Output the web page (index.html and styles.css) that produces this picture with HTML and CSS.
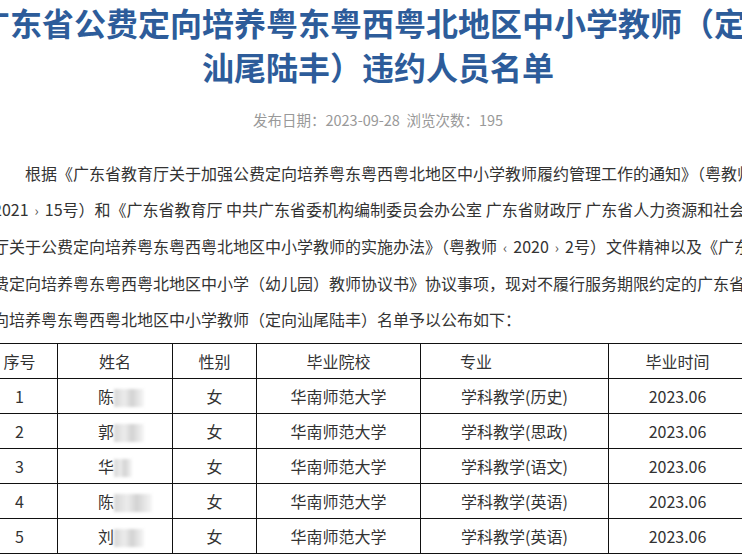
FILE: index.html
```html
<!DOCTYPE html>
<html lang="zh-CN">
<head>
<meta charset="utf-8">
<title>违约人员名单</title>
<link rel="stylesheet" href="styles.css">
</head>
<body>
<div class="page">
  <div class="article">
    <h1 class="title">广东省公费定向培养粤东粤西粤北地区中小学教师（定向<br>汕尾陆丰）违约人员名单</h1>
    <div class="meta">发布日期：2023-09-28&nbsp;&nbsp;浏览次数：195</div>
    <p class="body-text"><span class="indent">根据《广东省教育厅关于加强公费定向培养粤东粤西粤北地区中小学教师履约管理工作的通知》（粤教师〔</span><br>2021<span class="br">›</span>15号）和《广东省教育厅 中共广东省委机构编制委员会办公室 广东省财政厅 广东省人力资源和社会保障<br>厅关于公费定向培养粤东粤西粤北地区中小学教师的实施办法》（粤教师<span class="br">‹</span>2020<span class="br">›</span>2号）文件精神以及《广东省公<br>费定向培养粤东粤西粤北地区中小学（幼儿园）教师协议书》协议事项，现对不履行服务期限约定的广东省公费定<br>向培养粤东粤西粤北地区中小学教师（定向汕尾陆丰）名单予以公布如下：</p>
    <table class="list">
      <colgroup>
        <col class="c1"><col class="c2"><col class="c3"><col class="c4"><col class="c5"><col class="c6">
      </colgroup>
      <thead>
        <tr><th>序号</th><th>姓名</th><th>性别</th><th>毕业院校</th><th class="major-h">专业</th><th>毕业时间</th></tr>
      </thead>
      <tbody>
        <tr><td>1</td><td class="name">陈<span class="mask m30"></span></td><td>女</td><td>华南师范大学</td><td>学科教学(历史)</td><td>2023.06</td></tr>
        <tr><td>2</td><td class="name">郭<span class="mask m30"></span></td><td>女</td><td>华南师范大学</td><td>学科教学(思政)</td><td>2023.06</td></tr>
        <tr><td>3</td><td class="name">华<span class="mask m18"></span></td><td>女</td><td>华南师范大学</td><td>学科教学(语文)</td><td>2023.06</td></tr>
        <tr><td>4</td><td class="name">陈<span class="mask m38"></span></td><td>女</td><td>华南师范大学</td><td>学科教学(英语)</td><td>2023.06</td></tr>
        <tr><td>5</td><td class="name">刘<span class="mask m30"></span></td><td>女</td><td>华南师范大学</td><td>学科教学(英语)</td><td>2023.06</td></tr>
      </tbody>
    </table>
  </div>
</div>
</body>
</html>
```
FILE: styles.css
```css
html, body {
  margin: 0;
  padding: 0;
  overflow: hidden;
  background: #fff;
}
body {
  font-family: "Noto Sans CJK SC", "Noto Sans", sans-serif;
  color: #333;
}
.page {
  width: 742px;
  height: 558px;
  overflow: hidden;
}
.article {
  width: 830px;
  margin-left: -37px;
}
.title {
  margin: 0;
  font-size: 32px;
  line-height: 44px;
  font-weight: 700;
  color: #2d5c9a;
  text-align: center;
  white-space: nowrap;
}
.meta {
  margin-top: 20px;
  font-size: 14.5px;
  line-height: 24px;
  color: #999;
  text-align: center;
}
.body-text {
  margin: 23px 0 0;
  padding-left: 30px;
  font-size: 16px;
  line-height: 36px;
  white-space: nowrap;
  color: #333;
}
.indent {
  padding-left: 32px;
}
.br {
  display: inline-block;
  padding: 0 6px;
  font-size: 14px;
  color: #555;
}
.list {
  margin: 6px 0 0 18px;
  width: 765px;
  table-layout: fixed;
  border-collapse: collapse;
  font-size: 16px;
  color: #333;
}
.c1 { width: 76px; }
.c2 { width: 115px; }
.c3 { width: 84px; }
.c4 { width: 164px; }
.c5 { width: 188px; }
.c6 { width: 138px; }
.list th, .list td {
  border: 1px solid #111;
  height: 34px;
  padding: 0;
  text-align: center;
  font-weight: 400;
  line-height: 20px;
}
.list th.major-h {
  text-align: left;
  padding-left: 39px;
}
.list td.name {
  text-align: left;
  padding-left: 40px;
}
.mask {
  display: inline-block;
  height: 18px;
  vertical-align: -4px;
  background: linear-gradient(90deg, #d6d6d6 0%, #ececec 35%, #d2d2d2 60%, #e9e9e9 85%, #f6f6f6 100%);
  filter: blur(1.5px);
}
.m30 { width: 30px; }
.m18 { width: 18px; }
.m38 { width: 38px; }
```
